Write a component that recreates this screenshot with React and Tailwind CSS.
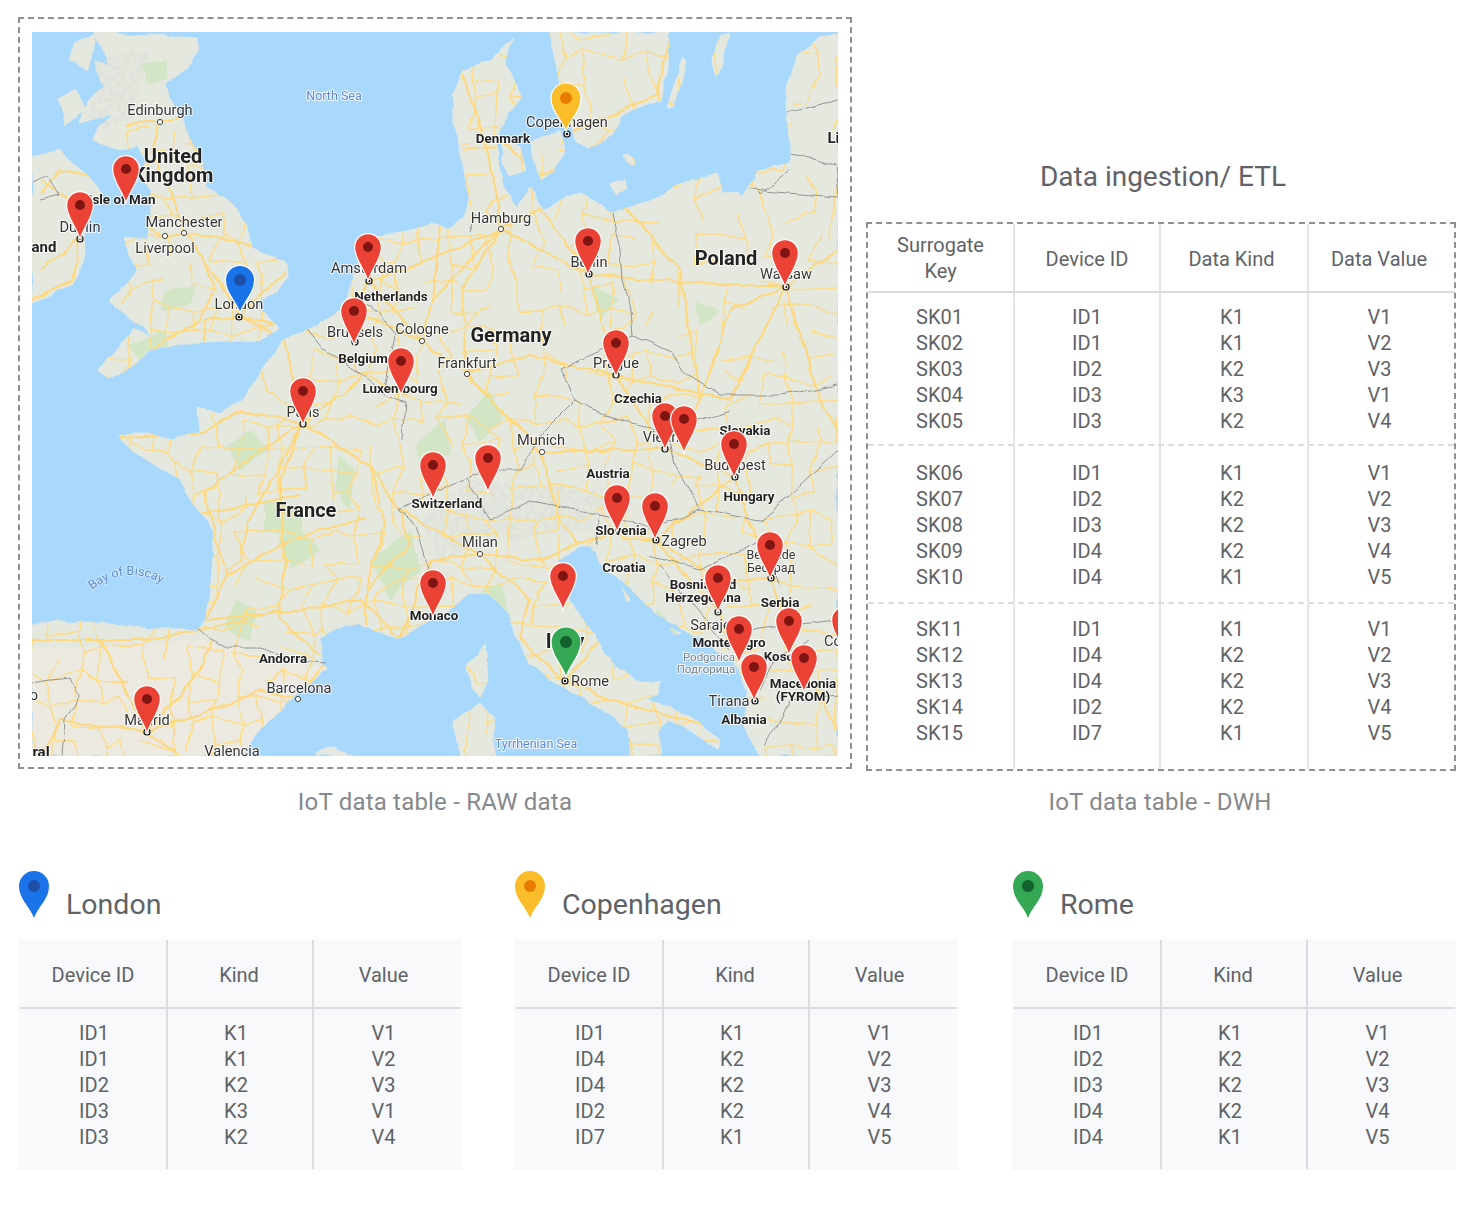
const GRAY = "text-[#5f6368]";

const land = [
  // great britain
  "M93 32L197 38L198 46L186 68L166 84L170 100L180 116L192 140L201 160L207 187L233 203L247 227L251 247L272 256L287 264L287 274L277 293L255 302L278 328L260 340L207 343L180 343L150 350L125 372L108 378L100 370L133 330L153 338L107 300L125 288L137 270L123 237L147 240L151 215L150 193L140 175L148 160L138 145L120 150L93 140L100 125L113 113L80 122L88 100L105 85L95 60L110 67Z",
  // ireland
  "M32 157L60 150L72 165L88 175L102 193L90 205L84 225L86 253L73 283L50 295L32 303Z",
  // continent
  "M32 623L90 622L140 627L197 632L207 617L213 560L213 533L200 513L180 480L150 462L123 443L120 437L140 432L172 440L200 433L198 407L222 412L247 397L262 370L283 340L317 327L340 310L353 277L367 240L392 233L417 230L430 223L450 228L463 217L470 197L465 177L462 157L453 123L453 97L463 72L490 60L513 37L505 60L523 97L508 113L497 143L500 165L505 190L517 207L530 187L543 210L563 200L580 193L597 202L610 213L640 205L663 197L673 187L717 173L723 190L743 197L760 170L790 163L790 140L787 117L787 87L797 57L817 37L838 33L838 756L760 756L745 727L747 693L737 667L723 653L690 633L653 613L640 597L603 563L590 547L580 547L558 560L560 583L573 608L590 627L603 650L617 667L640 682L660 682L657 693L647 700L673 707L693 720L720 740L717 748L703 740L683 727L667 720L657 730L663 753L660 756L632 756L628 730L603 710L580 697L553 680L530 663L517 640L508 613L490 595L470 593L453 607L440 615L400 638L367 627L347 623L320 637L320 660L327 670L287 703L260 730L243 756L32 756Z",
  // sweden and islands
  "M550 32L670 32L668 65L660 100L620 115L612 135L590 148L577 140L568 125L560 85Z",
  "M530 140L560 132L565 150L555 170L540 180L533 160Z",
  "M503 140L520 148L526 170L510 176L503 160Z",
  "M667 107L684 57L686 62L674 105Z",
  "M712 58L722 37L730 33L722 68L714 77Z",
  "M623 155L633 160L632 165L625 163Z",
  "M485 643L488 680L480 698L473 690L465 667L477 655Z",
  "M480 703L493 717L495 756L460 756L453 720L470 710Z",
  "M317 752L335 747L353 756L317 756Z",
  "M610 185L625 180L628 190L615 195Z",
  "M95 34L75 45L70 60L88 70Z",
  "M60 100L75 90L85 110L65 125Z",
  "M622 590L632 600L628 602Z",
  "M668 628L680 632L672 634Z",
];

const roads = [
  "125 125L160 122L185 118L192 140L202 165",
  "160 122L152 150L165 180L185 230L205 260L230 300L240 315",
  "128 220L165 236L184 233L215 236L250 245",
  "205 260L215 290L200 320L165 340L125 372",
  "240 315L255 300L285 272",
  "240 315L205 320L205 342",
  "240 315L275 325",
  "80 239L70 200L40 180",
  "80 239L72 280L32 300",
  "80 239L40 270",
  "100 178L60 170L40 195",
  "285 340L240 315",
  "303 423L285 340",
  "303 423L240 410L198 435L120 438",
  "303 423L205 490L215 540L227 575L205 620",
  "303 423L250 520L240 560L225 570",
  "303 423L280 480L285 560L280 620L325 660",
  "303 423L365 375L405 395",
  "303 423L370 465L385 520L365 590L365 625",
  "370 465L400 510L410 545L365 590",
  "205 620L300 610L360 600L400 638",
  "227 575L280 545L320 530L365 520",
  "200 515L250 505L300 495",
  "197 632L280 610",
  "32 640L90 640L140 640L197 632",
  "147 732L200 670L210 640",
  "147 732L100 640",
  "147 732L215 710L260 690L298 699",
  "147 732L180 756",
  "147 732L60 720L40 756",
  "298 699L325 665L355 625",
  "355 311L369 281L368 240",
  "355 311L422 341L467 374L542 452",
  "369 281L422 341L433 300L500 229",
  "369 281L430 260L501 229L589 274",
  "501 229L462 290L467 374",
  "501 229L540 210L589 274",
  "501 229L490 160L463 75",
  "589 274L660 281L786 287",
  "589 274L616 375L665 449",
  "467 374L542 452L600 450L665 449",
  "467 374L530 355L616 375",
  "616 375L730 400L786 287",
  "786 287L730 310L700 400L680 449",
  "786 287L838 250",
  "786 287L820 400L838 430",
  "620 200L680 270L700 400",
  "735 477L665 449",
  "735 477L655 540L621 540",
  "735 477L771 578L790 640L838 730",
  "655 540L718 612L755 701",
  "655 540L720 580L771 578",
  "480 554L542 560L577 545L621 530L655 540",
  "480 554L430 560L400 638",
  "480 554L530 600L520 640L565 681L610 700L700 725",
  "542 452L560 520L577 545",
  "480 554L400 510",
  "565 681L600 640L563 587",
  "567 134L555 115L550 33",
  "567 134L620 112L655 95L670 40",
  "567 134L577 160L540 175L505 145L463 150",
  "433 300L440 225",
];

const borders = [
  "197 630L207 638L227 648L260 648L287 660L325 663",
  "32 683L50 680L72 678L80 695L65 720L62 756",
  "308 330L325 350L340 360L365 378L385 395L405 402L402 440",
  "353 300L372 305L395 335L385 395",
  "470 232L475 215",
  "612 213L620 250L622 280L630 310L632 335",
  "632 335L600 350L560 368L575 400L600 415L640 425L668 430",
  "632 335L670 350L680 370L720 395L780 395L838 385",
  "575 400L545 430L520 470L490 470L465 478L398 510",
  "398 510L415 525L425 560L440 595",
  "465 478L490 520L530 500L600 515L625 520",
  "625 520L650 530L700 510L760 520L785 500L838 450",
  "668 430L675 465L685 480L700 510",
  "668 430L730 410",
  "600 515L595 545",
  "650 555L700 570L760 540L780 585",
  "660 565L730 650",
  "750 630L790 625L838 620",
  "760 690L775 660L810 640",
  "765 745L790 700L838 695",
  "790 170L760 195L755 190",
  "787 113L838 100",
  "790 153L835 165L838 195",
  "750 190L838 197",
  "32 183L48 175L60 195L40 200",
];

const greens = [
  "M142 65L165 60L170 78L150 85Z",
  "M165 290L195 285L190 305L160 310Z",
  "M130 345L165 330L170 350L140 360Z",
  "M225 445L250 430L270 450L240 470Z",
  "M340 455L355 470L350 510L335 490Z",
  "M265 500L300 510L300 540L265 530Z",
  "M280 540L300 530L320 550L290 570Z",
  "M235 600L255 610L250 640L225 630Z",
  "M415 445L445 420L450 455L420 470Z",
  "M465 420L490 390L505 420L480 440Z",
  "M590 285L620 300L600 320Z",
  "M695 300L720 310L700 325Z",
  "M470 600L500 580L510 620Z",
  "M640 620L660 610L680 640L650 650Z",
  "M370 560L410 530L420 570L390 600Z",
];

const places = [
  ["Edinburgh", 160, 115, "c"], ["United", 173, 163, "B"], ["Kingdom", 173, 182, "B"],
  ["Isle of Man", 122, 204, "b"], ["Dublin", 80, 232, "c"], ["Manchester", 184, 227, "c"],
  ["Liverpool", 165, 253, "c"], ["North Sea", 334, 100, "w"], ["London", 239, 309, "c"],
  ["Amsterdam", 369, 273, "c"], ["Netherlands", 391, 301, "b"], ["Brussels", 355, 337, "c"],
  ["Cologne", 422, 334, "c"], ["Belgium", 363, 363, "b"], ["Luxembourg", 400, 393, "b"],
  ["Paris", 303, 417, "c"], ["Germany", 511, 342, "B"], ["Frankfurt", 467, 368, "c"],
  ["Hamburg", 501, 223, "c"], ["Denmark", 503, 143, "b"], ["Copenhagen", 567, 127, "c"],
  ["Berlin", 589, 267, "c"], ["Poland", 726, 265, "B"], ["Warsaw", 786, 279, "c"],
  ["Prague", 616, 368, "c"], ["Czechia", 638, 403, "b"], ["Munich", 541, 445, "c"],
  ["Vienna", 665, 442, "c"], ["Slovakia", 745, 435, "b"], ["Budapest", 735, 470, "c"],
  ["Hungary", 749, 501, "b"], ["Austria", 608, 478, "b"], ["Switzerland", 447, 508, "b"],
  ["France", 306, 517, "B"], ["Milan", 480, 547, "c"], ["Slovenia", 621, 535, "b"],
  ["Zagreb", 684, 546, "c"], ["Croatia", 624, 572, "b"], ["Belgrade", 771, 559, "s"],
  ["Београд", 771, 572, "s"], ["Bosnia and", 703, 589, "b"], ["Herzegovina", 703, 602, "b"],
  ["Serbia", 780, 607, "b"], ["Monaco", 434, 620, "b"], ["Sarajevo", 718, 630, "c"],
  ["Montenegro", 729, 647, "b"], ["Podgorica", 709, 661, "p"], ["Подгорица", 706, 673, "p"],
  ["Kosovo", 786, 661, "b"], ["Macedonia", 803, 688, "b"], ["(FYROM)", 803, 701, "b"],
  ["Tirana", 729, 706, "c"], ["Albania", 744, 724, "b"], ["Italy", 565, 648, "B"],
  ["Rome", 590, 686, "c"], ["Tyrrhenian Sea", 536, 748, "w"], ["Andorra", 283, 663, "b"],
  ["Barcelona", 299, 693, "c"], ["Madrid", 147, 725, "c"], ["Valencia", 232, 756, "c"],
  ["and", 44, 252, "m"], ["Lit", 836, 143, "m"], ["ral", 41, 757, "m"], ["o", 34, 700, "c"],
  ["Co", 833, 646, "c"],
];

const labelClass = {
  c: "text-[14.6px] fill-[#333333]",
  s: "text-[12.5px] fill-[#333333]",
  b: "text-[13.4px] font-bold fill-[#222222]",
  m: "text-[15px] font-bold fill-[#222222]",
  B: "text-[20px] font-bold fill-[#222222]",
  w: "text-[12.5px] fill-[#5c88d6]",
  p: "text-[11.5px] fill-[#74808c]",
};

const dots = [[160, 122], [184, 233], [165, 236], [422, 341], [467, 374], [501, 229], [542, 452], [480, 554], [298, 699]];
const targets = [[80, 239], [239, 317], [369, 281], [355, 342], [303, 424], [567, 134], [589, 274], [786, 287], [616, 375], [665, 449], [735, 477], [656, 540], [771, 578], [718, 612], [755, 701], [565, 681], [147, 732]];

const redPins = [
  [126, 169], [80, 205], [368, 247], [354, 311], [401, 361], [303, 391], [433, 465], [488, 458],
  [588, 241], [785, 253], [616, 343], [665, 416], [684, 419], [734, 444], [617, 498], [655, 506],
  [770, 545], [718, 578], [563, 576], [433, 583], [845, 620], [739, 629], [789, 621], [754, 667],
  [804, 658], [147, 699],
];

const COLORS = {
  red: ["#ea4335", "#7e1512"],
  blue: ["#1a73e8", "#1c4fa5"],
  yellow: ["#fbbc2a", "#e87c00"],
  green: ["#34a853", "#12602d"],
};

function pinPath(r, t) {
  return `M0 ${t}C${-r * 0.3} ${t * 0.62} ${-r} ${r * 0.9} ${-r} 0A${r} ${r} 0 1 1 ${r} 0C${r} ${r * 0.9} ${r * 0.3} ${t * 0.62} 0 ${t}Z`;
}

function MapPin({ x, y, color, r = 13.4, tip = 34, dot = 5, outline = 1.2 }) {
  const [fill, dark] = COLORS[color];
  return (
    <g transform={`translate(${x} ${y})`}>
      <path d={pinPath(r, tip)} fill={fill} stroke="#fff" strokeWidth={outline} />
      <circle r={dot} fill={dark} />
    </g>
  );
}

// thin secondary road mesh, same result on every run
function mesh() {
  let seed = 7;
  const rnd = () => {
    seed = (seed * 16807) % 2147483647;
    return seed / 2147483647;
  };
  const step = 23;
  const nx = 36;
  const ny = 33;
  const pts = {};
  for (let x = 0; x < nx; x++) {
    for (let y = 0; y < ny; y++) {
      pts[`${x}-${y}`] = [32 + x * step + rnd() * 16 - 8, 32 + y * step + rnd() * 16 - 8];
    }
  }
  let d = "";
  for (let x = 0; x < nx; x++) {
    for (let y = 0; y < ny; y++) {
      const p = pts[`${x}-${y}`];
      // scotland and ireland carry far fewer roads
      if (p[0] < 120 && p[1] < 330) continue;
      if (p[1] < 130 && p[0] < 450) continue;
      const sparse = p[0] > 650 && p[1] < 400;
      const keep = sparse ? 0.42 : 0.6;
      const a = pts[`${x + 1}-${y}`];
      const b = pts[`${x}-${y + 1}`];
      if (a && rnd() < keep) d += `M${p[0].toFixed(1)} ${p[1].toFixed(1)}L${a[0].toFixed(1)} ${a[1].toFixed(1)}`;
      if (b && rnd() < keep) d += `M${p[0].toFixed(1)} ${p[1].toFixed(1)}L${b[0].toFixed(1)} ${b[1].toFixed(1)}`;
    }
  }
  return d;
}
const meshPath = mesh();

function EuropeMap() {
  return (
    <svg viewBox="32 32 806 724" className="block w-[806px] h-[724px] bg-[#a9d8fd] blur-[0.35px]">
      <defs>
        <clipPath id="landClip">
          {land.map((d, i) => (
            <path key={i} d={d} />
          ))}
        </clipPath>
        <filter id="wobble" filterUnits="userSpaceOnUse" x="0" y="0" width="880" height="790" colorInterpolationFilters="sRGB">
          <feTurbulence type="fractalNoise" baseFrequency="0.045" numOctaves="3" seed="4" result="n" />
          <feDisplacementMap in="SourceGraphic" in2="n" scale="7" xChannelSelector="R" yChannelSelector="G" />
        </filter>
        <filter id="terrain" filterUnits="userSpaceOnUse" x="0" y="0" width="880" height="790">
          <feTurbulence type="fractalNoise" baseFrequency="0.2" numOctaves="2" seed="9" result="t" />
          <feColorMatrix in="t" values="0 0 0 0 0.66  0 0 0 0 0.69  0 0 0 0 0.64  1.1 0 0 0 -0.35" result="c" />
          <feComposite in="c" in2="SourceAlpha" operator="in" />
          <feGaussianBlur stdDeviation="0.5" />
        </filter>
        <path id="biscay" d="M92 590Q128 562 166 586" />
      </defs>

      <g filter="url(#wobble)">
        <g fill="#e4e8df" stroke="#e4e8df" strokeWidth="1" strokeLinejoin="round">
          {land.map((d, i) => (
            <path key={i} d={d} />
          ))}
        </g>

        <g clipPath="url(#landClip)">
          <path d="M32 650L200 640L300 665L330 670L243 756L32 756Z" fill="#ece9e1" />
          <path d="M420 520L470 480L620 490L590 530L500 540L440 560Z" fill="#000" filter="url(#terrain)" />
          <path d="M90 60L150 50L130 120L90 130Z" fill="#000" filter="url(#terrain)" />
          {greens.map((d, i) => (
            <path key={i} d={d} fill="#d2e5c4" />
          ))}
          <path d={meshPath} fill="none" stroke="#fddc88" strokeWidth="1.5" />
          {roads.map((pts, i) => (
            <path key={i} d={`M${pts}`} fill="none" stroke="#fdd87c" strokeWidth="2.1" strokeLinejoin="round" />
          ))}
        </g>

        <g fill="none" stroke="#8b8b8b" strokeWidth="0.9" strokeLinejoin="round">
          {borders.map((pts, i) => (
            <path key={i} d={`M${pts}`} />
          ))}
        </g>
      </g>

      {places.map(([name, x, y, kind]) => (
        <text
          key={name + x}
          x={x}
          y={y}
          textAnchor="middle"
          stroke="#ffffff"
          strokeOpacity="0.85"
          strokeWidth="2"
          strokeLinejoin="round"
          paintOrder="stroke"
          className={`[font-family:Roboto,sans-serif] ${labelClass[kind]}`}
        >
          {name}
        </text>
      ))}
      <text
        stroke="#ffffff"
        strokeOpacity="0.6"
        strokeWidth="1.5"
        paintOrder="stroke"
        className="[font-family:Roboto,sans-serif] text-[12.5px] fill-[#5c88d6]"
      >
        <textPath href="#biscay">Bay of Biscay</textPath>
      </text>

      {dots.map(([x, y]) => (
        <circle key={x} cx={x} cy={y} r="2.6" fill="#fff" stroke="#444" strokeWidth="1" />
      ))}
      {targets.map(([x, y]) => (
        <g key={x}>
          <circle cx={x} cy={y} r="3" fill="#fff" stroke="#111" strokeWidth="1.2" />
          <circle cx={x} cy={y} r="1.3" fill="#111" />
        </g>
      ))}

      {redPins.map(([x, y]) => (
        <MapPin key={x} x={x} y={y} color="red" />
      ))}
      <MapPin x={240} y={280} color="blue" r={14.6} tip={33} dot={6} />
      <MapPin x={566} y={98} color="yellow" r={15} tip={33} dot={6} />
      <MapPin x={566} y={642} color="green" r={15} tip={35} dot={6} />
    </svg>
  );
}

function Stack({ values, shift = "" }) {
  return (
    <div className={`w-fit mx-auto text-left ${shift}`}>
      {values.map((v, i) => (
        <div key={i} className="h-[26px] leading-[26px]">
          {v}
        </div>
      ))}
    </div>
  );
}

const dwhGroups = [
  [
    ["SK01", "SK02", "SK03", "SK04", "SK05"],
    ["ID1", "ID1", "ID2", "ID3", "ID3"],
    ["K1", "K1", "K2", "K3", "K2"],
    ["V1", "V2", "V3", "V1", "V4"],
  ],
  [
    ["SK06", "SK07", "SK08", "SK09", "SK10"],
    ["ID1", "ID2", "ID3", "ID4", "ID4"],
    ["K1", "K2", "K2", "K2", "K1"],
    ["V1", "V2", "V3", "V4", "V5"],
  ],
  [
    ["SK11", "SK12", "SK13", "SK14", "SK15"],
    ["ID1", "ID4", "ID4", "ID2", "ID7"],
    ["K1", "K2", "K2", "K2", "K1"],
    ["V1", "V2", "V3", "V4", "V5"],
  ],
];

const dwhPad = [
  "pt-[11px] pb-[10px]",
  "pt-[14px] pb-[12px]",
  "pt-[12px] pb-[23px]",
];

const dwhShift = ["-translate-x-[1px]", "", "-translate-x-[2px]", "-translate-x-[2px]"];

function DwhTable() {
  const grid = "grid grid-cols-[147px_146px_148px_145px]";
  return (
    <div className={`border-2 border-dashed border-[#909090] ${GRAY} text-[20px] text-center`}>
      <div className={`${grid} h-[69px] border-b-2 border-[#dadce0]`}>
        <div className="border-r-2 border-[#e3e4e8] leading-[26px] flex items-center justify-center">
          Surrogate
          <br />
          Key
        </div>
        <div className="border-r-2 border-[#e3e4e8] pt-[2px] flex items-center justify-center">Device ID</div>
        <div className="border-r-2 border-[#e3e4e8] pt-[2px] pr-[5px] flex items-center justify-center">Data Kind</div>
        <div className="pt-[2px] pr-[5px] flex items-center justify-center">Data Value</div>
      </div>
      {dwhGroups.map((cols, g) => (
        <div key={g} className={`${grid} ${g < 2 ? "border-b-2 border-dashed border-[#dadce0]" : ""}`}>
          {cols.map((vals, c) => (
            <div key={c} className={`${dwhPad[g]} ${c < 3 ? "border-r-2 border-[#e3e4e8]" : ""}`}>
              <Stack values={vals} shift={dwhShift[c]} />
            </div>
          ))}
        </div>
      ))}
    </div>
  );
}

function CityTable({ city, color, ids, kinds, values, className = "" }) {
  const [fill, dark] = COLORS[color];
  const grid = "grid grid-cols-[148px_146px_147px] ml-[2px] mr-[1px]";
  return (
    <div className={`w-[444px] ${className}`}>
      <div className="h-[68px] flex items-start">
        <svg viewBox="-15 -15 30 48" className="block w-[30px] h-[48px] ml-[1px]">
          <path d={pinPath(15, 32)} fill={fill} />
          <circle r="6" fill={dark} />
        </svg>
        <div className={`ml-[17px] mt-[15px] text-[28.5px] leading-[38px] ${GRAY}`}>{city}</div>
      </div>
      <div className={`h-[231px] bg-[#f8f9fa] pt-[1px] ${GRAY} text-[20px] text-center`}>
        <div className={`${grid} h-[69px] border-b-2 border-[#dadce0]`}>
          <div className="border-r-2 border-[#dadce0] pt-[2px] flex items-center justify-center">Device ID</div>
          <div className="border-r-2 border-[#dadce0] pt-[2px] pr-[2px] flex items-center justify-center">Kind</div>
          <div className="pt-[2px] pr-[8px] flex items-center justify-center">Value</div>
        </div>
        <div className={`${grid} h-[160px]`}>
          <div className="border-r-2 border-[#dadce0] pt-[11px]">
            <Stack values={ids} shift="translate-x-[1px]" />
          </div>
          <div className="border-r-2 border-[#dadce0] pt-[11px]">
            <Stack values={kinds} shift="-translate-x-[4px]" />
          </div>
          <div className="pt-[11px]">
            <Stack values={values} shift="-translate-x-[4px]" />
          </div>
        </div>
      </div>
    </div>
  );
}

export default function App() {
  return (
    <div className="w-[1472px] h-[1206px] bg-white [font-family:Roboto,sans-serif] pt-[17px] pl-[18px]">
      <div className="flex items-start">
        <div className="w-[834px] h-[752px] border-2 border-dashed border-[#909090] pt-[13px] pl-[12px]">
          <EuropeMap />
        </div>
        <div className="ml-[14px] w-[590px]">
          <div className={`h-[205px] pt-[140px] pl-[4px] text-center text-[28px] leading-[40px] ${GRAY}`}>
            Data ingestion/ ETL
          </div>
          <DwhTable />
        </div>
      </div>

      <div className="flex mt-[15px] text-[24px] leading-[32px] tracking-[0.2px] text-[#85888c]">
        <div className="w-[834px] text-center">IoT data table - RAW data</div>
        <div className="ml-[14px] w-[588px] text-center">IoT data table - DWH</div>
      </div>

      <div className="flex gap-[52px] mt-[53px]">
        <CityTable
          city="London"
          color="blue"
          ids={["ID1", "ID1", "ID2", "ID3", "ID3"]}
          kinds={["K1", "K1", "K2", "K3", "K2"]}
          values={["V1", "V2", "V3", "V1", "V4"]}
        />
        <CityTable
          city="Copenhagen"
          color="yellow"
          ids={["ID1", "ID4", "ID4", "ID2", "ID7"]}
          kinds={["K1", "K2", "K2", "K2", "K1"]}
          values={["V1", "V2", "V3", "V4", "V5"]}
        />
        <CityTable
          city="Rome"
          color="green"
          className="ml-[2px]"
          ids={["ID1", "ID2", "ID3", "ID4", "ID4"]}
          kinds={["K1", "K2", "K2", "K2", "K1"]}
          values={["V1", "V2", "V3", "V4", "V5"]}
        />
      </div>
    </div>
  );
}
